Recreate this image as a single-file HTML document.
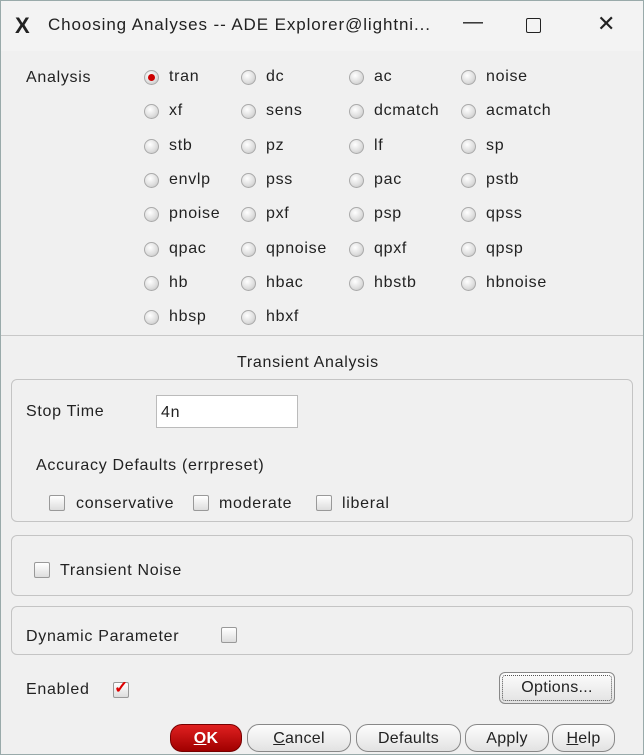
<!DOCTYPE html><html><head><style>
body{margin:0;width:644px;height:755px;overflow:hidden;background:#fff;font-family:"Liberation Sans",sans-serif;font-size:16px;letter-spacing:0.7px;color:#222}
.win{position:absolute;left:0;top:0;width:642px;height:753px;border:1px solid #9aa;background:#f0f0f0}
.tb{position:absolute;left:0;top:0;width:642px;height:50px;background:#f3f3f3}
.a{position:absolute;white-space:nowrap}
.r{position:absolute;width:15px;height:15px;border-radius:50%;background:radial-gradient(circle at 40% 35%,#fff,#ddd 60%,#bbb);border:1px solid #aaa;box-sizing:border-box}
.r.on::after{content:"";position:absolute;left:3px;top:3px;width:7px;height:7px;border-radius:50%;background:#c00}
.c{position:absolute;width:16px;height:16px;border:1px solid #999;border-radius:2px;background:linear-gradient(#fff,#ddd);box-sizing:border-box}
.box{position:absolute;border:1px solid #c4c4c4;border-radius:6px}
.btn{position:absolute;height:28px;border:1px solid #888;border-radius:12px;background:linear-gradient(#fdfdfd,#e2e2e2);text-align:center;line-height:28px;box-sizing:border-box;font-size:16px;letter-spacing:0.3px}
</style></head><body><div class="win">
<div class="tb"></div>
<div class="a" style="left:14px;top:12px;font-size:22px;font-weight:bold;color:#222">X</div>
<div class="a" style="left:47px;top:14px;font-size:17px;letter-spacing:0.9px">Choosing Analyses -- ADE Explorer@lightni...</div>
<div class="a" style="left:462px;top:10px;font-size:20px">—</div>
<div class="a" style="left:525px;top:17px;width:13px;height:13px;border:1.5px solid #222;border-radius:2px"></div>
<div class="a" style="left:596px;top:10px;font-size:22px">✕</div>
<div class="a" style="left:25px;top:68px">Analysis</div>
<div id="g"></div>
<div class="a" style="left:0;top:334px;width:642px;border-top:1px solid #c8c8c8"></div>
<div class="a" style="left:236px;top:353px">Transient Analysis</div>
<div class="box" style="left:10px;top:378px;width:620px;height:141px"></div>
<div class="a" style="left:25px;top:402px">Stop Time</div>
<div class="a" style="left:155px;top:394px;width:142px;height:33px;background:#fff;border:1px solid #bbb;box-sizing:border-box;padding:8px 4px">4n</div>
<div class="a" style="left:35px;top:456px">Accuracy Defaults (errpreset)</div>
<div class="c" style="left:48px;top:494px"></div><div class="a" style="left:75px;top:494px">conservative</div>
<div class="c" style="left:192px;top:494px"></div><div class="a" style="left:218px;top:494px">moderate</div>
<div class="c" style="left:315px;top:494px"></div><div class="a" style="left:341px;top:494px">liberal</div>
<div class="box" style="left:10px;top:534px;width:620px;height:59px"></div>
<div class="c" style="left:33px;top:561px"></div><div class="a" style="left:59px;top:561px">Transient Noise</div>
<div class="box" style="left:10px;top:605px;width:620px;height:47px"></div>
<div class="a" style="left:25px;top:627px">Dynamic Parameter</div><div class="c" style="left:220px;top:626px"></div>
<div class="a" style="left:25px;top:680px">Enabled</div>
<div class="c" style="left:112px;top:681px"></div><div class="a" style="left:113px;top:677px;color:#d00;font-size:17px;font-weight:bold">✓</div>
<div class="btn" style="left:498px;top:671px;width:116px;height:32px;line-height:30px;border-radius:6px;outline:1px dotted #555;outline-offset:-4px">Options...</div>
<div class="btn" style="left:169px;top:723px;width:72px;background:linear-gradient(#e02020,#a00000);color:#fff;font-weight:bold;border-color:#700"><u>O</u>K</div>
<div class="btn" style="left:246px;top:723px;width:104px"><u>C</u>ancel</div>
<div class="btn" style="left:355px;top:723px;width:105px">Defaults</div>
<div class="btn" style="left:464px;top:723px;width:84px">Apply</div>
<div class="btn" style="left:551px;top:723px;width:63px"><u>H</u>elp</div>
</div>
<script>
var n=[["tran","dc","ac","noise"],["xf","sens","dcmatch","acmatch"],["stb","pz","lf","sp"],["envlp","pss","pac","pstb"],["pnoise","pxf","psp","qpss"],["qpac","qpnoise","qpxf","qpsp"],["hb","hbac","hbstb","hbnoise"],["hbsp","hbxf"]];
var xs=[143,240,348,460],h="";
n.forEach(function(r,i){var y=67+i*34.3;r.forEach(function(t,j){h+='<div class="r'+(i+j==0?' on':'')+'" style="left:'+xs[j]+'px;top:'+(y+2)+'px"></div><div class="a" style="left:'+(xs[j]+25)+'px;top:'+y+'px">'+t+'</div>';});});
document.getElementById('g').innerHTML=h;
</script></body></html>
